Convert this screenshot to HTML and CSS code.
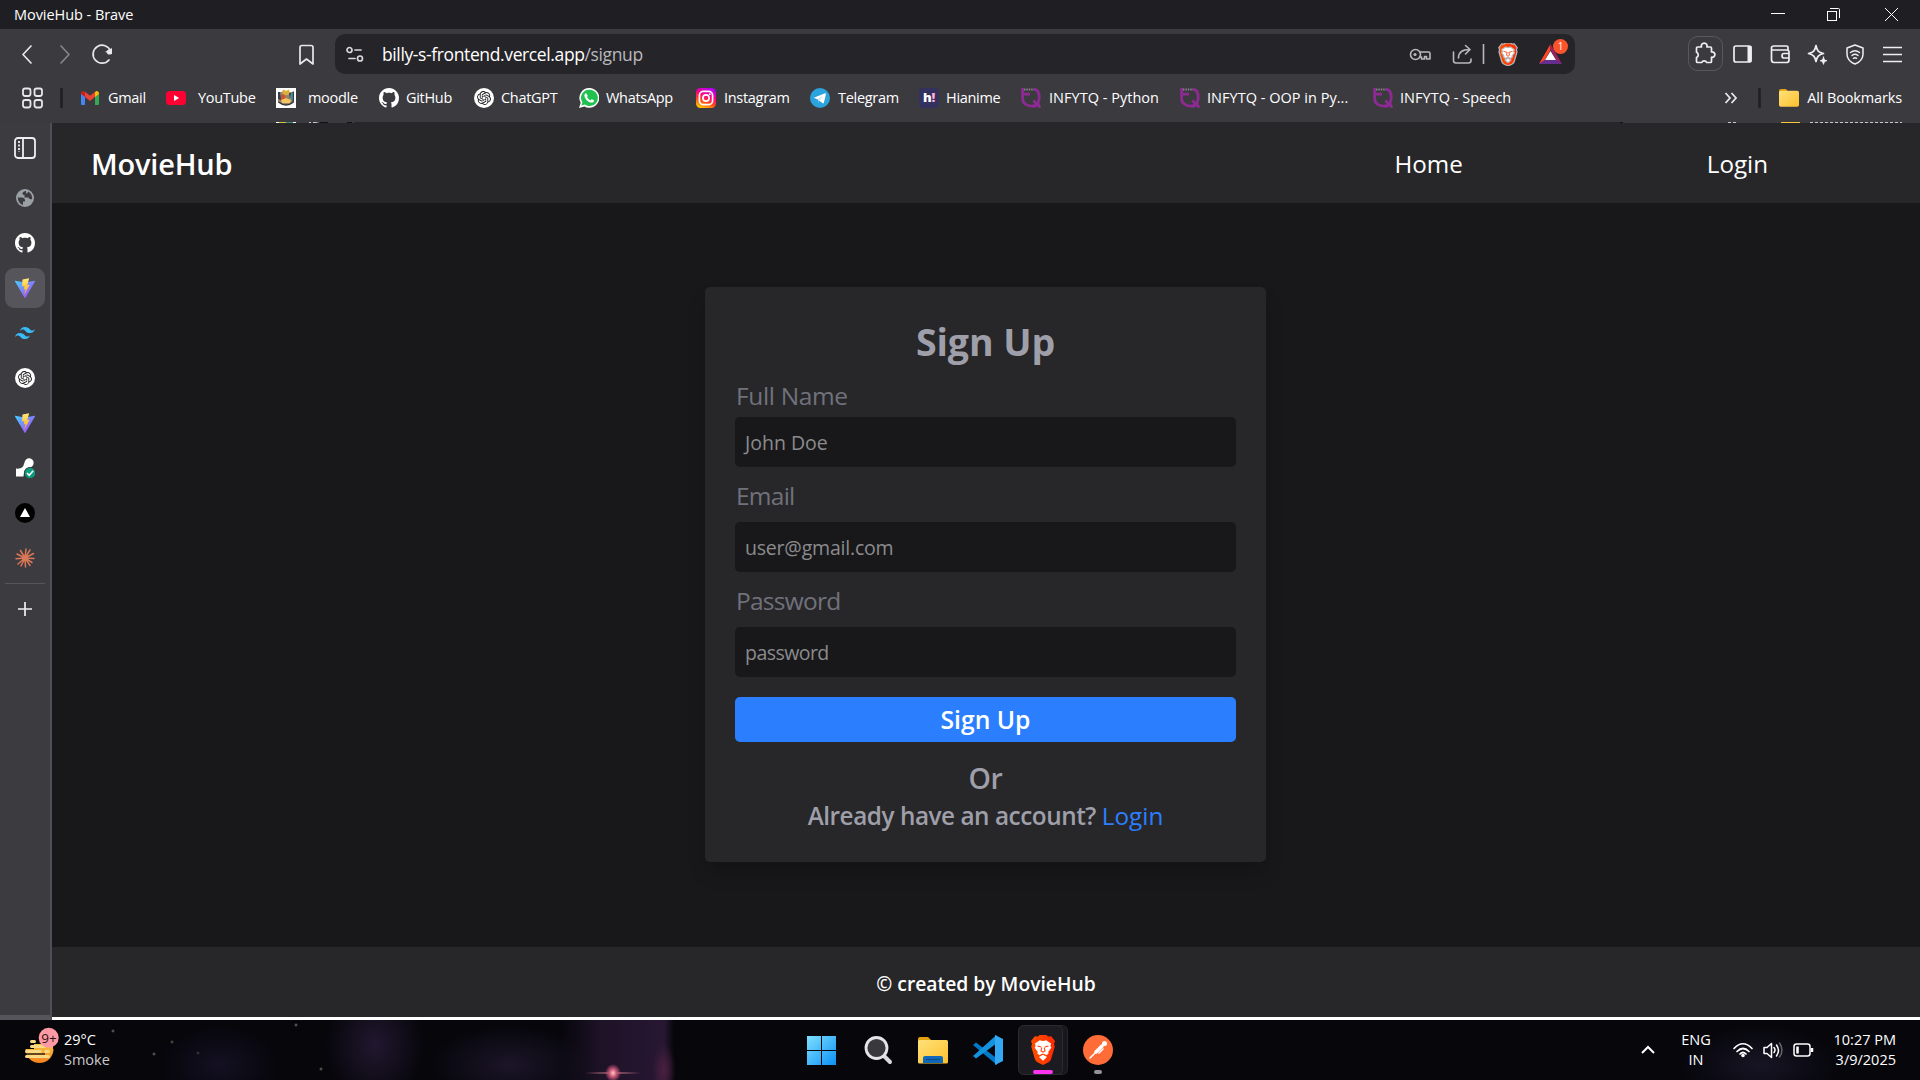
FILE: index.html
```html
<!DOCTYPE html>
<html lang="en"><head><meta charset="utf-8"><title>MovieHub - Brave</title><link rel="stylesheet" href="styles.css"></head>
<body>
<svg class="defs" width="0" height="0">
<defs>
<linearGradient id="vA" x1="0" y1="0" x2="1" y2="1"><stop offset="0" stop-color="#41d1ff"/><stop offset="1" stop-color="#bd34fe"/></linearGradient>
<linearGradient id="vB" x1="0" y1="0" x2="0" y2="1"><stop offset="0" stop-color="#ffea83"/><stop offset="1" stop-color="#ffa800"/></linearGradient>
<linearGradient id="ig" x1="0.2" y1="1" x2="0.6" y2="0"><stop offset="0" stop-color="#ffd000"/><stop offset=".35" stop-color="#ff4a1a"/><stop offset=".65" stop-color="#ff0080"/><stop offset="1" stop-color="#b800f0"/></linearGradient>
<linearGradient id="win" x1="0" y1="0" x2="1" y2="1"><stop offset="0" stop-color="#7fe0ff"/><stop offset="1" stop-color="#0b90f5"/></linearGradient>
<linearGradient id="fold" x1="0" y1="0" x2="1" y2="1"><stop offset="0" stop-color="#ffe27a"/><stop offset="1" stop-color="#fdbf2d"/></linearGradient>
<linearGradient id="brv" x1="0" y1="0" x2="1" y2="0"><stop offset="0" stop-color="#ff5000"/><stop offset="1" stop-color="#ff2a00"/></linearGradient>
<linearGradient id="sun" x1="0" y1="0" x2="0" y2="1"><stop offset="0" stop-color="#f6c445"/><stop offset="1" stop-color="#f4801c"/></linearGradient>
</defs>
<symbol id="github" viewBox="0 0 16 16"><path fill="#fff" fill-rule="evenodd" d="M8 0C3.58 0 0 3.58 0 8c0 3.54 2.29 6.53 5.47 7.59.4.07.55-.17.55-.38 0-.19-.01-.82-.01-1.49-2.01.37-2.53-.49-2.69-.94-.09-.23-.48-.94-.82-1.13-.28-.15-.68-.52-.01-.53.63-.01 1.08.58 1.23.82.72 1.21 1.87.87 2.33.66.07-.52.28-.87.51-1.07-1.78-.2-3.64-.89-3.64-3.95 0-.87.31-1.59.82-2.15-.08-.2-.36-1.02.08-2.12 0 0 .67-.21 2.2.82.64-.18 1.32-.27 2-.27s1.36.09 2 .27c1.53-1.04 2.2-.82 2.2-.82.44 1.1.16 1.92.08 2.12.51.56.82 1.27.82 2.15 0 3.07-1.87 3.75-3.65 3.95.29.25.54.73.54 1.48 0 1.07-.01 1.93-.01 2.2 0 .21.15.46.55.38A8.01 8.01 0 0 0 16 8c0-4.42-3.58-8-8-8z"/></symbol>
<symbol id="gpt" viewBox="0 0 20 20"><circle cx="10" cy="10" r="10" fill="#fff"/><path fill="#1c1c1e" transform="translate(3.04 3.04) scale(.58)" d="M22.2819 9.8211a5.9847 5.9847 0 0 0-.5157-4.9108 6.0462 6.0462 0 0 0-6.5098-2.9A6.0651 6.0651 0 0 0 4.9807 4.1818a5.9847 5.9847 0 0 0-3.9977 2.9 6.0462 6.0462 0 0 0 .7427 7.0966 5.98 5.98 0 0 0 .511 4.9107 6.051 6.051 0 0 0 6.5146 2.9001A5.9847 5.9847 0 0 0 13.2599 24a6.0557 6.0557 0 0 0 5.7718-4.2058 5.9894 5.9894 0 0 0 3.9977-2.9001 6.0557 6.0557 0 0 0-.7475-7.0729zm-9.022 12.6081a4.4755 4.4755 0 0 1-2.8764-1.0408l.1419-.0804 4.7783-2.7582a.7948.7948 0 0 0 .3927-.6813v-6.7369l2.02 1.1686a.071.071 0 0 1 .038.052v5.5826a4.504 4.504 0 0 1-4.4945 4.4944zm-9.6607-4.1254a4.4708 4.4708 0 0 1-.5346-3.0137l.142.0852 4.783 2.7582a.7712.7712 0 0 0 .7806 0l5.8428-3.3685v2.3324a.0804.0804 0 0 1-.0332.0615L9.74 19.9502a4.4992 4.4992 0 0 1-6.1408-1.6464zM2.3408 7.8956a4.485 4.485 0 0 1 2.3655-1.9728V11.6a.7664.7664 0 0 0 .3879.6765l5.8144 3.3543-2.0201 1.1685a.0757.0757 0 0 1-.071 0l-4.8303-2.7865A4.504 4.504 0 0 1 2.3408 7.872zm16.5963 3.8558L13.1038 8.364 15.1192 7.2a.0757.0757 0 0 1 .071 0l4.8303 2.7913a4.4944 4.4944 0 0 1-.6765 8.1042v-5.6772a.79.79 0 0 0-.407-.667zm2.0107-3.0231l-.142-.0852-4.7735-2.7818a.7759.7759 0 0 0-.7854 0L9.409 9.2297V6.8974a.0662.0662 0 0 1 .0284-.0615l4.8303-2.7866a4.4992 4.4992 0 0 1 6.6802 4.66zM8.3065 12.863l-2.02-1.1638a.0804.0804 0 0 1-.038-.0567V6.0742a4.4992 4.4992 0 0 1 7.3757-3.4537l-.142.0805L8.704 5.459a.7948.7948 0 0 0-.3927.6813zm1.0976-2.3654l2.602-1.4998 2.6069 1.4998v2.9994l-2.5974 1.4997-2.6067-1.4997Z"/></symbol>
<symbol id="vite" viewBox="0 0 20 20"><path fill="url(#vA)" d="M.2 2.8 10 4.500l9.800-1.700c.3 0 .4.3.2.6l-9.600 16.300c-.2.3-.6.3-.8 0L0 3.400c-.2-.3 0-.6.2-.6z"/><path fill="url(#vB)" d="M14.200.2 7.500 1.600l-.5 7 2.400-.5-.7 3.400 1.900-.5-1.500 5.800 5.600-10-2.500.5z"/></symbol>
<symbol id="infy" viewBox="0 0 20 20"><g fill="none" stroke="#8e2a94" stroke-width="2.800"><path d="M1.600 0v10.500c0 4.500 4.200 7.600 9 7.600 5 0 7.600-3.600 7.600-8.600 0-4.800-1.600-8.200-5.400-8.200M1 6.200h8M12.300 12.500l7 7M12.300 19l6-4"/></g><path stroke="#88868d" stroke-width="2.200" stroke-dasharray="1.400 1" d="M3 1.500h10"/></symbol>
<symbol id="brave" viewBox="0 0 24 30"><path fill="url(#brv)" d="M7 1.500 8.500 0h7L17 1.500l3.200-.3L24 6l-1 3 .8 2.500-3.600 12.300c-.4 1.600-1.400 2.600-2.700 3.500L12 30l-5.500-2.700c-1.300-.9-2.300-1.900-2.700-3.500L.2 11.500 1 9 0 6l3.800-4.800z"/><path fill="#fff" d="m12 6 3.200-.8 4.800 3.400-.6 2.600 1 1.400-3.200 4.400.5 1.400-2.400 1.900-2.300-1.500h-2l-2.300 1.500-2.400-1.900.5-1.400-3.200-4.400 1-1.400L4 8.600l4.800-3.400z"/><path fill="#fff" d="m12 19.800 4 2.300-4 3.600-4-3.600z"/><path fill="none" stroke="#ff400c" stroke-width="1.100" d="m6.500 11 3.800 1M17.500 11l-3.800 1M10.800 12.500 10 16l2 1.200 2-1.200-.8-3.500"/></symbol>
<symbol id="folder" viewBox="0 0 20 20"><path fill="#e3a10d" d="M0 3a2 2 0 0 1 2-2h5l2 2.500v4H0z"/><rect y="2.800" width="20" height="16" rx="1.800" fill="url(#fold)"/></symbol>
</svg>

<div class="titlebar"><span class="t-title">MovieHub - Brave</span>
<svg class="wincontrols" width="150" height="29" fill="none" stroke="#fff" stroke-width="1"><path d="M1 13.500h14"/><rect x="57.500" y="11.500" width="9" height="9"/><path d="M60 8.500h8.500q1 0 1 1V18"/><path d="m115 8 13 13M128 8l-13 13"/></svg></div>

<div class="toolbar">
<svg class="navicons" width="321" height="50" viewBox="0 29 321 50" fill="none" stroke="#e8e8ea" stroke-width="1.700" stroke-linecap="round" stroke-linejoin="round"><path d="m31 46-8 8.500 8 8.500"/><path stroke="#85848a" d="m61 46 8 8.500-8 8.500"/><path d="M110.500 51a9 9 0 1 0-1.500 9"/><path fill="#e8e8ea" stroke="none" d="m105 52 7-4v6z"/><circle cx="109.500" cy="52" r="2.600" fill="#e8e8ea" stroke="none"/><path d="M300 47.500q0-2 2-2h9q2 0 2 2V64l-6.500-5-6.500 5z"/></svg>
<div class="urlbar">
<svg width="18" height="18" viewBox="0 0 18 18" fill="none" stroke="#d9d9dc" stroke-width="1.700" stroke-linecap="round"><circle cx="3.500" cy="5" r="2.500"/><path d="M9 5h6"/><circle cx="14" cy="13.500" r="2.500"/><path d="M3 13.500h6"/></svg>
<span class="url">billy-s-frontend.vercel.app<em>/signup</em></span>
<svg class="urlicons" width="165" height="40" viewBox="1405 34 165 40" fill="none" stroke="#b9b8bd" stroke-width="1.600" stroke-linecap="round" stroke-linejoin="round"><circle cx="1415.500" cy="54.500" r="5"/><circle cx="1415" cy="54.500" r="1.600" fill="#b9b8bd" stroke="none"/><path d="M1420 52h8.500q1.500 0 1.500 1.500v5.500h-3.500v-2.500h-2v2.500h-3v-2h-1.500"/><path d="M1453.500 52v8.500q0 2.500 2.500 2.500h12.500q2.500 0 2.500-2.500V59M1458.500 58c0-6.500 4-8.500 11-8.500m-4-4 4.500 4-4.500 4.500"/><path stroke-linecap="butt" d="M1483.500 44v20"/><use href="#brave" x="1498" y="43" width="20" height="23"/><path fill="#ff4724" stroke="none" d="m1550.500 44-11.500 20 5.500-3.500 6-10.500z"/><path fill="#9e1f63" stroke="none" d="m1550.500 44 11.500 20-5.500-3.500-6-10.500z"/><path fill="#662d91" stroke="none" d="M1539 64h23l-5.500-4h-12z"/><path fill="#fff" stroke="none" d="m1550.500 51-5.500 9h11z"/></svg><span class="bat-badge">1</span>
</div>
<svg class="extras" width="240" height="50" viewBox="1680 29 240 50" fill="none" stroke="#efeff1" stroke-width="1.700" stroke-linecap="round" stroke-linejoin="round"><rect x="1688.500" y="36.500" width="34" height="34" rx="9" stroke="#59585e" stroke-width="1"/><path d="M1697.500 47h4a2.900 2.900 0 1 1 5.400 0h3.600q1 0 1 1v4a2.700 2.700 0 1 1 0 5.200v4.300q0 1-1 1h-3.800a2.700 2.700 0 0 0-5 0h-4.200q-1 0-1-1v-4a2.800 2.800 0 0 0 0-5.200V48q0-1 1-1z"/><rect x="1734" y="46" width="17" height="16" rx="2"/><path stroke-width="4" stroke-linecap="butt" d="M1749.500 46v16"/><path d="M1788 50v-2.500q0-1.500-1.500-1.500h-12.500q-2.500 0-2.500 2v11.500q0 3 2.500 3h12.500q2.500 0 2.500-2.500v-8q0-2-2.500-2h-13.500M1789 53.500h-5q-2 0-2 2.200 0 2.300 2 2.300h5"/><path d="M1816 45.500c1 5.500 2.500 7 7.500 8-5 1.200-6.500 3-7.500 8-1-5-2.500-6.800-7.500-8 5-1 6.500-2.500 7.500-8z"/><path fill="#efeff1" stroke-width=".8" d="M1823.500 57c.6 2.600 1 3.100 3.500 3.700-2.500.6-2.900 1.200-3.500 3.700-.6-2.500-1.100-3.100-3.500-3.700 2.400-.6 2.900-1.100 3.500-3.700z"/><path stroke-width="1.500" d="m1855 45 8 3v6q0 7-8 10-8-3-8-10v-6zM1850.500 52.500q4.500-3.500 9 0M1852 55.500q3-2.300 6 0M1853.500 58.300q1.500-1 3 0"/><path stroke-linecap="butt" d="M1883 47.500h19M1883 54.500h19M1883 61.500h19"/></svg>
</div>

<div class="bookmarks">
<svg class="apps" width="66" height="43" viewBox="0 79 66 43" fill="none" stroke="#e8e8ea" stroke-width="1.800"><rect x="23" y="88.500" width="7.500" height="7.500" rx="2.200"/><rect x="34.500" y="88.500" width="7.500" height="7.500" rx="2.200"/><rect x="23" y="100" width="7.500" height="7.500" rx="2.200"/><rect x="34.500" y="100" width="7.500" height="7.500" rx="2.200"/><path stroke="#1f1e23" stroke-width="2.500" stroke-linecap="round" d="M61.500 89v18"/></svg>
<div class="list">
<span class="bm"><svg viewBox="0 0 20 20"><path fill="#4285f4" d="M1 5v11q0 1 1 1h3V8z"/><path fill="#34a853" d="M19 5v11q0 1-1 1h-3V8z"/><path fill="#ea4335" d="M5 3.800 10 7.700l5-3.900V9l-5 4-5-4z"/><path fill="#c5221f" d="M1 5.500c0-2 2-3 3.300-2l.7.400V9L1 6z"/><path fill="#fbbc04" d="M19 5.500c0-2-2-3-3.300-2l-.7.400V9l4-3z"/></svg><b>Gmail</b></span>
<span class="bm wide"><svg viewBox="0 0 20 20"><rect y="3" width="20" height="14" rx="3.500" fill="#ff0033"/><path fill="#fff" d="m8 7 5.200 3L8 13z"/></svg><b>YouTube</b></span>
<span class="bm wide"><svg viewBox="0 0 20 20"><path fill="#fff" d="M0 0h20v20H0z"/><path fill="#9a8470" d="M2 4h16v10q-8 6-16 0z"/><path fill="#d9b13a" d="m6 3 2-1.500 2 1.500 3-1.500 1 3.500-2 2H7z"/><path fill="#c9552f" d="m5 7 3-1 1 3 4 2-3 2H4z"/><path fill="#f0c860" d="m5 12 5-2 5 2-1 3H6z"/><path fill="#2e3f55" d="M2 4h2l1 8-3-1zM13 5h2l-1 6zM16.500 3.500H18v10l-1.500 1z"/><path fill="#2f9a9a" d="M15 5h1.500v7H15z"/><path fill="none" stroke="#333" stroke-width="1.600" d="M2.500 14q7.500 6 15 0"/></svg><b>moodle</b></span>
<span class="bm near"><svg><use href="#github"/></svg><b>GitHub</b></span>
<span class="bm near"><svg><use href="#gpt"/></svg><b>ChatGPT</b></span>
<span class="bm near"><svg viewBox="0 0 20 20"><path fill="#fff" d="M10.200 0a9.800 9.800 0 0 0-8.500 14.700L0 20l5.500-1.500A9.900 9.900 0 1 0 10.200 0z"/><path fill="#1fc24f" d="M10.200 1.700a8.100 8.100 0 0 0-6.800 12.600l-1 3.300 3.500-1a8.200 8.200 0 1 0 4.300-14.900z"/><path fill="#fff" d="M7.200 5.300c-.9-.2-2 1.200-1.800 2.600.6 3.200 4 6.500 7.300 6.700 1.300 0 2.500-1 2.400-2.200l-2.300-1.300-1.300 1.300c-1.500-.5-2.800-1.800-3.500-3.300l.9-1.200z"/></svg><b>WhatsApp</b></span>
<span class="bm"><svg viewBox="0 0 20 20" fill="none" stroke="#fff" stroke-width="1.700"><rect width="20" height="20" rx="4.500" fill="url(#ig)" stroke="none"/><rect x="3.400" y="3.400" width="13.200" height="13.200" rx="3.800"/><circle cx="10" cy="10" r="3.100"/><circle cx="13.800" cy="6.200" r=".9" fill="#fff" stroke="none"/></svg><b>Instagram</b></span>
<span class="bm"><svg viewBox="0 0 20 20"><circle cx="10" cy="10" r="10" fill="#2ba3dd"/><path fill="#fff" d="M3.800 9.800 15 5.300c.6-.2 1 .2.900.9l-2 8.600c-.1.600-.7.700-1.200.4L7.800 11.600z"/><path fill="#b9d9ec" d="m7.700 11.500 5.600-4-4.500 4.900-.3 2.600z"/></svg><b>Telegram</b></span>
<span class="bm near"><i class="hi">h<u>!</u></i><b>Hianime</b></span>
<span class="bm infy"><svg><use href="#infy"/></svg><b>INFYTQ - Python</b></span>
<span class="bm infy near"><svg><use href="#infy"/></svg><b>INFYTQ - OOP in Py...</b></span>
<span class="bm infy near"><svg><use href="#infy"/></svg><b>INFYTQ - Speech</b></span>
</div>
<svg class="more" width="48" height="43" viewBox="1720 79 48 43" fill="none" stroke="#e8e8ea" stroke-width="1.800"><path d="m1727.500 93 4.500 5-4.500 5M1733.500 93l4.500 5-4.500 5"/><path stroke="#1f1e23" stroke-width="2.500" stroke-linecap="round" d="M1761.500 89v18"/></svg>
<span class="bm all"><svg><use href="#folder"/></svg><b>All Bookmarks</b></span>
<i class="edge left"></i><i class="edge right"></i>
</div>

<div class="window">
<aside>
<span class="tab"><svg width="22" height="22" viewBox="0 0 22 22" fill="none" stroke="#efeff1" stroke-width="1.800"><rect x="1" y="1" width="20" height="20" rx="3"/><path d="M9 1v20"/><path stroke-dasharray="2 1.500" d="M5 4v11"/></svg></span>
<span class="tab globe"><svg width="18" height="18" viewBox="0 0 18 18"><circle cx="9" cy="9" r="9" fill="#9aa0a6"/><path fill="#3c3b40" d="M1.800 8.500h3.700q3.500 0 3.500 3v1H7v3.400Q2 14.500 1.800 8.500zM10 2q-3.500.5-3.500 2.500 0 1.500 2 1.500v2.500h4q.5 2.500 3.700 1.500.2-5.500-4.200-7.500 0 2-2 2z"/></svg></span>
<span class="tab"><svg width="20" height="20"><use href="#github"/></svg></span>
<span class="tab on"><svg width="20" height="20"><use href="#vite"/></svg></span>
<span class="tab"><svg width="20" height="12" viewBox="0 0 20 12" fill="#38bdf8"><path d="M10 0C7.300 0 5.700 1.300 5 4c1-1.300 2.200-1.800 3.500-1.500.8.200 1.300.7 1.900 1.400C11.400 4.900 12.500 6 15 6c2.700 0 4.300-1.300 5-4-1 1.300-2.200 1.800-3.500 1.500-.8-.2-1.300-.7-1.900-1.400C13.600 1.100 12.500 0 10 0zM5 6c-2.700 0-4.300 1.300-5 4 1-1.300 2.200-1.800 3.500-1.500.8.200 1.300.7 1.900 1.400C6.400 10.900 7.500 12 10 12c2.700 0 4.300-1.300 5-4-1 1.300-2.200 1.800-3.500 1.500-.8-.2-1.300-.7-1.900-1.400C8.600 7.100 7.500 6 5 6z"/></svg></span>
<span class="tab"><svg width="20" height="20"><use href="#gpt"/></svg></span>
<span class="tab"><svg width="20" height="20"><use href="#vite"/></svg></span>
<span class="tab"><svg width="20" height="20" viewBox="0 0 20 20"><path fill="#fff" d="M1 10.500q4 .5 6-1 1.500-1 2.500-5A4.600 4.600 0 1 1 14 9.500q-4 .3-5 5-.3 2-.5 4H1z"/><circle cx="15" cy="15" r="6" fill="#3c3b40"/><circle cx="15" cy="15" r="5.200" fill="#0b9b7d"/><path fill="none" stroke="#fff" stroke-width="1.500" d="m12 15 2.200 2.300 4-4.500"/></svg></span>
<span class="tab"><svg width="20" height="20"><circle cx="10" cy="10" r="10"/><path fill="#fff" d="m10 5 5 9H5z"/></svg></span>
<span class="tab"><svg width="20" height="20" viewBox="-10 -10 20 20" stroke="#d97757" stroke-width="1.500" stroke-linecap="round"><path d="M0 0 1-9M0 0l5-8M0 0l8.500-4.500M0 0l9 .5M0 0l7 4.500M0 0l5 7.500M0 0l.5 9M0 0l-4 8M0 0l-7 6M0 0l-9 .8M0 0l-8-4M0 0l-4.500-7.500"/><circle r="3" fill="#d97757" stroke="none"/></svg></span>
<hr>
<svg class="plus" width="14" height="14" stroke="#efeff1" stroke-width="1.700"><path d="M7 0v14M0 7h14"/></svg>
</aside>
<main>
<header><h1>MovieHub</h1><nav><a>Home</a><a class="login">Login</a></nav></header>
<section class="stage">
<form class="card">
<h2>Sign Up</h2>
<label class="l-name">Full Name</label><div class="field p-name">John Doe</div>
<label class="l-email">Email</label><div class="field p-email">user@gmail.com</div>
<label class="l-pass">Password</label><div class="field p-pass">password</div>
<div class="btn">Sign Up</div>
<p class="or">Or</p>
<p class="have"><span>Already have an account?</span> <a>Login</a></p>
</form>
</section>
<footer><span>© created by MovieHub</span></footer>
</main>
</div>

<div class="taskbar">
<div class="weather"><svg width="40" height="50" viewBox="20 1025 40 50"><path fill="url(#sun)" d="M25.500 1049h28a14 14 0 0 1-28 0zM34 1044h19v6H34z"/><path stroke="#07070c" stroke-width="1.200" d="M25 1054h20"/><g stroke="#f9d983" stroke-width="3" stroke-linecap="round"><path d="M31.500 1041.500h3M31.500 1046.500h13M26.500 1051.500h14M45.500 1051.500h3M26.500 1056.500h22"/></g><circle cx="48.700" cy="1037.700" r="10" fill="#ff99a4"/></svg><span class="nine">9+</span><p><span class="deg">29°C</span><br><em>Smoke</em></p></div>
<svg class="dock" width="320" height="60" viewBox="800 1020 320 60">
<path fill="url(#win)" d="M807 1036h14v14h-14zM822 1036h14v14h-14zM807 1051h14v14h-14zM822 1051h14v14h-14z"/>
<path stroke="#d9dadd" stroke-width="4" stroke-linecap="round" d="m884 1056 6 6"/><circle cx="876.500" cy="1048" r="10.500" fill="#39393d" stroke="#e4e5e7" stroke-width="2.800"/>
<path fill="#e3a10d" d="M918 1039q0-2 2-2h8l3 3v6h-13z"/><rect x="918" y="1040" width="30" height="23.500" rx="1.500" fill="url(#fold)"/><path fill="#0f69b8" d="M923 1063v-5q0-2 2-2h16q2 0 2 2v5z"/><path stroke="#0a4d8c" stroke-width="1.200" d="M926 1059.500h14"/>
<path fill="#0179c8" d="m973 1045 3-2.500 21 16v6.500z"/><path fill="#1592dd" d="m973 1056 3 2.500 20.500-15V1035z"/><path fill="#32a9f2" d="m995 1035 8 4v22l-8 4z"/>
<rect x="1023" y="1025.500" width="44.500" height="49" rx="5" fill="#17171d" stroke="#25252b"/><rect x="1018.500" y="1025.500" width="44" height="49" rx="5" fill="#1b1b21" stroke="#2b2b31"/>
<use href="#brave" x="1031" y="1035" width="24" height="30"/><rect x="1033" y="1070" width="20" height="4" rx="2" fill="#fc34ef"/>
<circle cx="1098" cy="1050" r="15" fill="#ff6c37"/><path stroke="#fff" stroke-width="3.500" stroke-linecap="round" d="m1096 1052 6-6"/><path stroke="#fff" stroke-width="1.600" stroke-linecap="round" d="m1090 1058 6-6M1099 1053l4-4"/><circle cx="1104.500" cy="1043.500" r="2.500" fill="#fff"/><rect x="1094" y="1070" width="8" height="4" rx="2" fill="#939298"/></svg>
<svg class="chev" width="14" height="10" fill="none" stroke="#fff" stroke-width="2"><path d="m1 8 6-6 6 6"/></svg>
<p class="lang"><span>ENG</span><br>IN</p>
<svg class="tray" width="84" height="24" viewBox="1731 1038 84 24" fill="none" stroke="#fff" stroke-width="1.700" stroke-linecap="round"><path d="M1734 1048.500q9-9.500 18 0M1737 1051.500q6-6 12 0M1740 1054q3-3 6 0"/><circle cx="1743" cy="1055.500" r="1.800" fill="#fff" stroke="none"/><path stroke-width="1.500" stroke-linejoin="round" d="M1764 1047.500h3l4.500-4v14l-4.500-4h-3zM1774 1047.500q2 2.500 0 5M1776.500 1045q4 5.500 0 11"/><path stroke="#65646c" stroke-width="1.500" d="M1779.500 1043q5 7.500 0 14"/><rect x="1794" y="1044" width="16" height="12" rx="2.500" stroke-width="1.500"/><path stroke-linecap="butt" stroke-width="2.500" d="M1797.500 1046.500v7M1812 1048v4"/></svg>
<p class="clock"><span>10:27 PM</span><br>3/9/2025</p>
</div>
</body></html>
```
FILE: styles.css
```css
* { box-sizing: border-box; }
body { margin: 0; width: 1920px; height: 1080px; overflow: hidden; background: #3b3a3f; color: #fff; font-family: "Open Sans", "Noto Sans", sans-serif; }
svg { display: block; flex: none; }
.defs { position: absolute; }
h1, h2, p { margin: 0; }
em, i { font-style: normal; }
b { font-weight: 400; }
u { text-decoration: none; }
span, a, h1, h2, b { white-space: nowrap; }
.titlebar { height: 29px; background: #1f1e23; display: flex; justify-content: space-between; padding: 0 0 0 14px; line-height: 29px; font-size: 14.500px; }
.t-title { letter-spacing: -.05px; }
.toolbar { height: 50px; display: flex; }
.navicons { margin-right: 14px; }
.urlbar { position: relative; width: 1240px; height: 40px; margin-top: 5px; border-radius: 10px; background: #252429; display: flex; align-items: center; padding-left: 11px; }
.url { margin-left: 18px; font-size: 17.500px; line-height: 40px; letter-spacing: -.38px; }
.url em { color: #b9b8bd; }
.urlicons { margin-left: auto; margin-right: 5px; }
.bat-badge { position: absolute; left: 1218px; top: 5px; width: 15px; height: 15px; border-radius: 8px; background: #fb542b; font-size: 10px; line-height: 15px; text-align: center; }
.extras { margin-left: auto; }
.bookmarks { position: relative; height: 43px; display: flex; }
.list { margin-left: 14px; display: grid; grid-template-columns: 86px 110px 103px 95px 105px 117px 114px 109px 102px 159px 193px 139px; }
.bm { display: flex; align-items: center; height: 38px; font-size: 14.500px; line-height: 38px; letter-spacing: -.3px; }
.bm svg, .hi { width: 20px; height: 20px; margin-right: 8px; flex: none; }
.bm.wide svg { margin-right: 12px; }
.bm.near svg, .near .hi { margin-right: 7px; }
.infy { letter-spacing: .02px; }
.hi { border-radius: 4px; background: #35315f; color: #fff; font-weight: 800; font-size: 13px; line-height: 19px; text-align: center; }
.hi u { color: #ffb1dc; }
.more { margin-left: auto; }
.bm.all { margin: 0 18px 0 13px; letter-spacing: -.15px; }
.edge { position: absolute; top: 43px; height: 1px; z-index: 1; }
.edge.left { left: 0; width: 355px; background: linear-gradient(90deg, #3b3a3f 276px, #fff 276px 279px, #d3c23e 279px 286px, #398981 286px 293px, #fff 293px 296px, #3b3a3f 296px 309px, #c8c8ca 309px 311px, #3b3a3f 311px 313px, #c8c8ca 313px 316px, #111 320px 328px, #3b3a3f 328px 347px, #111 347px 352px, #3b3a3f 352px); }
.edge.right { right: 0; width: 300px; background: linear-gradient(90deg, #111 3px, #3b3a3f 3px 108px, #c8c8ca 108px 111px, #3b3a3f 111px 113px, #c8c8ca 113px 116px, #3b3a3f 116px 161px, #f6c63c 161px 180px, #3b3a3f 180px 188px, transparent 188px), repeating-linear-gradient(90deg, #c8c8ca 0 3px, #3b3a3f 3px 5px); border-right: 18px solid #3b3a3f; }
.window { height: 898px; display: flex; background: #fff; }
aside { width: 52px; height: 898px; background: #3c3b40; border-right: 2px solid #504f55; border-bottom: 5px solid #55545a; display: flex; flex-direction: column; align-items: center; padding-top: 6px; }
.tab { width: 40px; height: 40px; border-radius: 9px; margin-bottom: 5px; display: flex; align-items: center; justify-content: center; flex: none; }
.tab:first-child { margin-bottom: 10px; }
.tab.on { background: #56555b; }
hr { width: 40px; height: 1px; border: 0; background: #56555b; margin: 0 0 18px; flex: none; }
main { width: 1868px; height: 895px; display: flex; flex-direction: column; background: #18181a; }
header { height: 81px; background: #27272a; display: flex; justify-content: space-between; padding: 0 152px 0 39px; line-height: 83px; }
h1 { font-size: 29px; font-weight: 600; line-height: 84px; letter-spacing: -.2px; }
nav { display: flex; gap: 244px; font-size: 24.200px; }
.stage { height: 744px; padding: 84px 1px 0 0; display: flex; justify-content: center; align-items: flex-start; }
.card { width: 561px; height: 575px; padding: 30px; border-radius: 5px; background: #27272a; box-shadow: 0 12px 20px -4px rgba(0,0,0,.25); color: #9f9fa9; }
h2 { text-align: center; font-size: 37.500px; line-height: 50px; font-weight: 700; letter-spacing: -.1px; }
label { display: block; height: 50px; padding-left: 1px; color: #71717b; font-size: 24.500px; line-height: 58px; letter-spacing: -.35px; }
.l-email, .l-pass { height: 55px; letter-spacing: -.75px; }
.field { height: 50px; border-radius: 5px; background: #18181b; color: #8b8b8d; font-size: 19.500px; line-height: 52px; padding-left: 10px; }
.p-email { letter-spacing: -.2px; }
.p-pass { letter-spacing: -.55px; }
.btn { height: 45px; margin-top: 20px; border-radius: 5px; background: #2b7fff; color: #fff; text-align: center; font-size: 24.700px; line-height: 46px; font-weight: 600; }
.or { margin-top: 15px; text-align: center; font-size: 28.500px; line-height: 42px; font-weight: 600; letter-spacing: -.3px; }
.have { text-align: center; font-size: 24.300px; line-height: 34px; font-weight: 600; letter-spacing: -.45px; }
.have a { color: #2b7fff; font-weight: 400; letter-spacing: 0; }
footer { height: 70px; background: #27272a; text-align: center; font-size: 19.300px; line-height: 73px; font-weight: 600; }
.taskbar { position: relative; height: 60px; display: flex; align-items: center; font-size: 14.500px; line-height: 20px; background:
  radial-gradient(ellipse 8px 9px at 613px 53px, #ffc6bd, #c65577 45%, transparent),
  radial-gradient(ellipse 32px 1px at 613px 53px, #e88a9c, transparent),
  radial-gradient(ellipse 12px 26px at 664px 50px, #4a2040, transparent),
  linear-gradient(90deg, transparent 560px, #1d1226 600px, #281733 664px, transparent 674px),
  radial-gradient(ellipse 50px 60px at 375px 25px, #22172f, transparent),
  radial-gradient(ellipse 80px 40px at 510px 45px, #1c1528, transparent),
  radial-gradient(ellipse 60px 40px at 220px 45px, #141022, transparent),
  radial-gradient(circle 2px at 113px 11px, #777, transparent),
  radial-gradient(circle 2px at 172px 22px, #665, transparent),
  radial-gradient(circle 2px at 154px 34px, #776, transparent),
  radial-gradient(circle 2px at 198px 33px, #776, transparent),
  radial-gradient(circle 2px at 321px 49px, #776, transparent),
  radial-gradient(circle 2px at 296px 5px, #777, transparent),
  radial-gradient(ellipse 80px 40px at 1760px 45px, #171524, transparent),
  #06060b; }
.weather { position: relative; display: flex; padding-left: 20px; width: 150px; }
.weather p { margin: 5px 0 0 4px; }
.weather em { color: #c9c9cc; }
.nine { position: absolute; left: 39px; top: 3px; width: 20px; text-align: center; color: #2b1517; font-size: 13.500px; }
.dock { margin-left: 650px; }
.chev { margin-left: 521px; }
.lang { margin-left: 26px; width: 30px; text-align: center; }
.tray { margin-left: 20px; }
.clock { margin-left: auto; margin-right: 24px; text-align: right; }
```
